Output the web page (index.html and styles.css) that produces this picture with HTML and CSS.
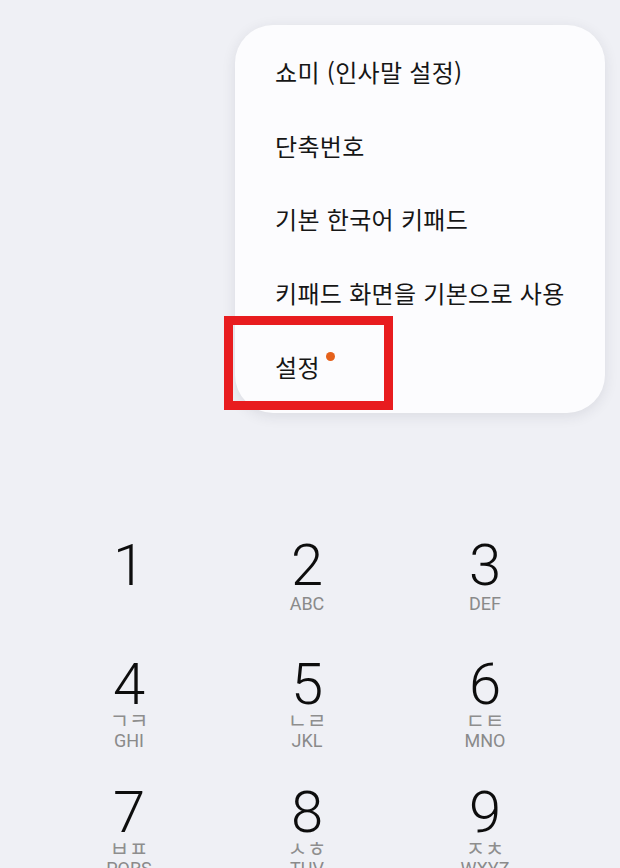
FILE: index.html
```html
<!DOCTYPE html>
<html lang="ko">
<head>
    <meta charset="UTF-8">
    <meta name="viewport" content="width=device-width, initial-scale=1.0">
    <title>Phone</title>
    <link rel="stylesheet" href="styles.css">
</head>
<body>

    <div class="menu-wrap">
        <ul class="menu">
            <li class="menu-item">쇼미 (인사말 설정)</li>
            <li class="menu-item">단축번호</li>
            <li class="menu-item">기본 한국어 키패드</li>
            <li class="menu-item">키패드 화면을 기본으로 사용</li>
            <li class="menu-item settings">
                <span>설정</span><span class="dot"></span>
                <div class="highlight"></div>
            </li>
        </ul>
    </div>

    <div class="keypad">
        <div class="key">
            <div class="digit">1</div>
            <div class="letters blank">&nbsp;</div>
        </div>
        <div class="key">
            <div class="digit">2</div>
            <div class="letters">ABC</div>
        </div>
        <div class="key">
            <div class="digit">3</div>
            <div class="letters">DEF</div>
        </div>

        <div class="key">
            <div class="digit">4</div>
            <div class="jamo">ㄱㅋ</div>
            <div class="letters">GHI</div>
        </div>
        <div class="key">
            <div class="digit">5</div>
            <div class="jamo">ㄴㄹ</div>
            <div class="letters">JKL</div>
        </div>
        <div class="key">
            <div class="digit">6</div>
            <div class="jamo">ㄷㅌ</div>
            <div class="letters">MNO</div>
        </div>

        <div class="key">
            <div class="digit">7</div>
            <div class="jamo">ㅂㅍ</div>
            <div class="letters">PQRS</div>
        </div>
        <div class="key">
            <div class="digit">8</div>
            <div class="jamo">ㅅㅎ</div>
            <div class="letters">TUV</div>
        </div>
        <div class="key">
            <div class="digit">9</div>
            <div class="jamo">ㅈㅊ</div>
            <div class="letters">WXYZ</div>
        </div>
    </div>

</body>
</html>
```

FILE: styles.css
```css
body {
    margin: 0;
    height: 868px;
    overflow: hidden;
    background: #eff0f5;
    font-family: "Noto Sans CJK KR", "Noto Sans", sans-serif;
}

.menu-wrap {
    display: flex;
    justify-content: flex-end;
    padding: 25px 15px 0 0;
}

.menu {
    list-style: none;
    margin: 0;
    padding: 10px 0;
    width: 370px;
    background: #fcfcfe;
    border-radius: 38px;
    box-shadow: 0 3px 14px rgba(40, 40, 60, 0.10);
}

.menu-item {
    position: relative;
    display: flex;
    align-items: center;
    height: 73.6px;
    padding-left: 40px;
    font-size: 24px;
    letter-spacing: 0.3px;
    color: #161616;
}

.dot {
    width: 9px;
    height: 9px;
    border-radius: 50%;
    background: #e5611b;
    margin: 0 0 19px 6px;
}

.highlight {
    position: absolute;
    left: -11px;
    top: -13px;
    width: 151px;
    height: 76px;
    border: 9px solid #e81c1f;
}

.keypad {
    display: grid;
    grid-template-columns: repeat(3, 178px);
    grid-auto-rows: 128px;
    margin: 99px 0 0 40px;
}

.key {
    display: flex;
    flex-direction: column;
    align-items: center;
    justify-content: center;
    font-family: Roboto, "Noto Sans CJK KR", sans-serif;
}

.digit {
    font-size: 58px;
    font-weight: 300;
    line-height: 56px;
    color: #0d0d0d;
}

.jamo {
    font-family: "Noto Sans CJK KR", sans-serif;
    font-size: 21px;
    line-height: 14px;
    padding-bottom: 4px;
    color: #8e8e8e;
}

.letters {
    font-size: 18px;
    line-height: 22px;
    color: #8a8a8a;
}

.blank {
    visibility: hidden;
}
```
